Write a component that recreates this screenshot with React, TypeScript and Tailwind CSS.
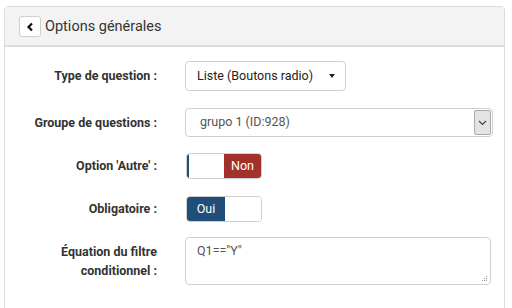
import React from 'react';

function Row({ label, children, top = false }: { label: React.ReactNode; children: React.ReactNode; top?: boolean }) {
  return (
    <div className={`flex ${top ? 'items-start' : 'items-center'}`}>
      <label
        className={`w-[152px] shrink-0 text-right font-bold text-[12.5px] text-[#333] ${top ? 'leading-[19px] pt-[5px]' : 'leading-[22px]'}`}
      >
        {label}
      </label>
      <div className="ml-[28px] flex-1">{children}</div>
    </div>
  );
}

export default function App() {
  return (
    <div className="w-[512px] h-[308px] bg-white pt-[6px] pl-[4px] overflow-hidden" style={{ fontFamily: 'Roboto, "Liberation Sans", sans-serif' }}>
      <div className="w-[501px] h-[320px] border border-[#dcdcdc] rounded-t-[4px]">
        <div className="h-[40px] bg-[#f3f3f3] border-b-2 border-[#dcdcdc] flex items-center pl-[14px] pt-[1px]">
          <button className="w-[22px] h-[21px] bg-white border border-[#cfcfcf] rounded-[3px] flex items-center justify-center">
            <svg width="8" height="10" viewBox="0 0 8 10">
              <path d="M6 1.5 L2.5 5 L6 8.5" stroke="#111" strokeWidth="2.2" fill="none" />
            </svg>
          </button>
          <span className="ml-[4px] text-[14.5px] text-[#333]">Options générales</span>
        </div>

        <div className="pt-[14px] pr-[12px] flex flex-col">
          <Row label="Type de question :">
            <div className="w-[161px] h-[30px] border border-[#cfcfcf] rounded-[4px] flex items-center justify-between pl-[11px] pr-[10px] text-[12.5px] text-[#222]">
              <span>Liste (Boutons radio)</span>
              <span className="w-0 h-0 border-l-[3.5px] border-r-[3.5px] border-t-[4px] border-l-transparent border-r-transparent border-t-[#222]" />
            </div>
          </Row>

          <div className="mt-[17px]">
            <Row label="Groupe de questions :">
              <div className="w-[308px] h-[29px] border border-[#cfcfcf] rounded-[4px] flex items-center justify-between pl-[14px] pr-[1px] text-[12.5px] text-[#555]">
                <span>grupo 1 (ID:928)</span>
                <span className="w-[17px] h-[25px] bg-[#e3e3e3] border border-[#aaa] rounded-[2px] flex items-center justify-center">
                  <svg width="9" height="6" viewBox="0 0 9 6">
                    <path d="M1 1 L4.5 4.5 L8 1" stroke="#444" strokeWidth="1.2" fill="none" />
                  </svg>
                </span>
              </div>
            </Row>
          </div>

          <div className="mt-[16px]">
            <Row label="Option 'Autre' :">
              <div className="w-[76px] h-[26px] ml-[1px] border border-[#cfcfcf] rounded-[4px] flex overflow-hidden text-[12.5px]">
                <div className="w-[37px] bg-white border-l-2 border-[#1f4e79]" />
                <div className="flex-1 bg-[#a2312c] text-white flex items-center justify-center">Non</div>
              </div>
            </Row>
          </div>

          <div className="mt-[17px]">
            <Row label="Obligatoire :">
              <div className="w-[76px] h-[26px] ml-[1px] border border-[#cfcfcf] rounded-[4px] flex overflow-hidden text-[12.5px]">
                <div className="w-[38px] bg-[#1f4e79] text-white flex items-center justify-center">Oui</div>
                <div className="flex-1 bg-white" />
              </div>
            </Row>
          </div>

          <div className="mt-[15px]">
            <Row label={<>Équation du filtre<br />conditionnel :</>} top>
              <div className="relative w-[306px] h-[48px] border border-[#cfcfcf] rounded-[4px] pl-[11px] pt-[4px] text-[12.5px] text-[#555]">
                Q1=="Y"
                <svg className="absolute right-[2px] bottom-[2px]" width="7" height="7" viewBox="0 0 7 7">
                  <rect x="5" y="1" width="1" height="1" fill="#999" />
                  <rect x="3" y="3" width="1" height="1" fill="#999" />
                  <rect x="5" y="3" width="1" height="1" fill="#999" />
                  <rect x="1" y="5" width="1" height="1" fill="#999" />
                  <rect x="3" y="5" width="1" height="1" fill="#999" />
                  <rect x="5" y="5" width="1" height="1" fill="#999" />
                </svg>
              </div>
            </Row>
          </div>
        </div>
      </div>
    </div>
  );
}
